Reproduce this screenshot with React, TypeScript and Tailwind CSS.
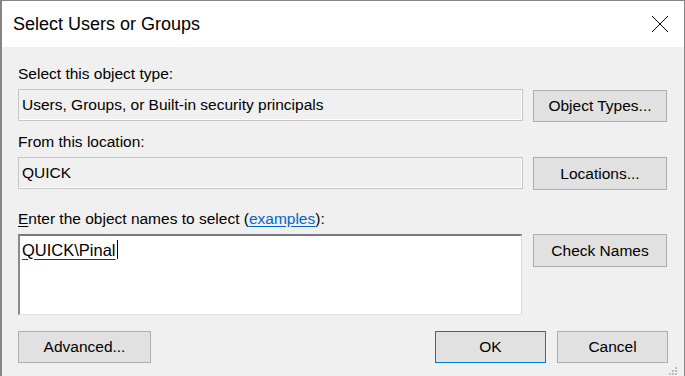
import React from 'react';

const font = { fontFamily: '"Liberation Sans", Arial, sans-serif' };

function Btn({ label, className = '', primary = false }: { label: string; className?: string; primary?: boolean }) {
  return (
    <button
      className={
        'flex items-center justify-center bg-[#e1e1e1] text-[15.5px] leading-[18px] text-black border ' +
        (primary ? 'border-[#0078d7] ' : 'border-[#adadad] ') +
        className
      }
    >
      {label}
    </button>
  );
}

function ReadOnlyBox({ value }: { value: string }) {
  return (
    <div className="flex h-[32px] w-[505px] items-center border border-[#c6c6c6] bg-[#f0f0f0] pl-[3px] text-[15.5px] leading-[18px] text-black shadow-[inset_-1px_-1px_0_#ffffff]">
      {value}
    </div>
  );
}

function Grip() {
  const dots = [
    [9, 1],
    [6, 4],
    [9, 4],
    [3, 7],
    [6, 7],
    [9, 7],
  ];
  return (
    <svg width="12" height="10" viewBox="0 0 12 10" className="absolute bottom-0 right-[6px]">
      {dots.map(([x, y], i) => (
        <rect key={i} x={x} y={y} width="2" height="2" fill="#bdbdbd" />
      ))}
    </svg>
  );
}

export default function App() {
  return (
    <div
      className="relative h-[376px] w-[685px] overflow-hidden border-l-2 border-r border-t border-[#858585] bg-[#f0f0f0]"
      style={font}
    >
      <div className="flex h-[46px] items-center justify-between bg-white pl-[11px] pr-[14px]">
        <span className="text-[18px] leading-[22px] text-black">Select Users or Groups</span>
        <svg width="18" height="18" viewBox="0 0 18 18" className="mr-[1px]">
          <path d="M1 1 L17 17 M17 1 L1 17" stroke="#000" strokeWidth="1" fill="none" />
        </svg>
      </div>

      <div className="flex flex-col pl-[16px] pr-[16px] pt-[18px] text-[15.5px] leading-[18px] text-black">
        <div className="mb-[6px]">Select this object type:</div>
        <div className="flex gap-[10px]">
          <ReadOnlyBox value="Users, Groups, or Built-in security principals" />
          <Btn label="Object Types..." className="mt-px h-[32px] w-[134px]" />
        </div>

        <div className="mb-[6px] mt-[11px]">From this location:</div>
        <div className="flex gap-[10px]">
          <ReadOnlyBox value="QUICK" />
          <Btn label="Locations..." className="h-[33px] w-[134px]" />
        </div>

        <div className="mb-[6px] mt-[20px]">
          <span className="underline underline-offset-2">E</span>nter the object names to select (
          <span className="text-[#0066cc] underline underline-offset-2">examples</span>):
        </div>
        <div className="flex gap-[11px]">
          <div className="h-[81px] w-[504px] border-b border-l-2 border-r border-t-2 border-b-[#e3e3e3] border-l-[#8a8a8a] border-r-[#dadada] border-t-[#7a7a7a] bg-white pl-[2px] pt-[4px] text-[16.5px]">
            <div className="flex items-center">
              <span className="underline decoration-[#333] underline-offset-[3px]">QUICK\Pinal</span>
              <span className="ml-px inline-block h-[19px] w-px bg-black" />
            </div>
          </div>
          <Btn label="Check Names" className="h-[33px] w-[134px]" />
        </div>

        <div className="mt-[16px] flex">
          <Btn label="Advanced..." className="h-[32px] w-[133px]" />
          <Btn label="OK" primary className="ml-auto h-[32px] w-[111px]" />
          <Btn label="Cancel" className="ml-[11px] h-[32px] w-[111px]" />
        </div>
      </div>
      <Grip />
    </div>
  );
}
